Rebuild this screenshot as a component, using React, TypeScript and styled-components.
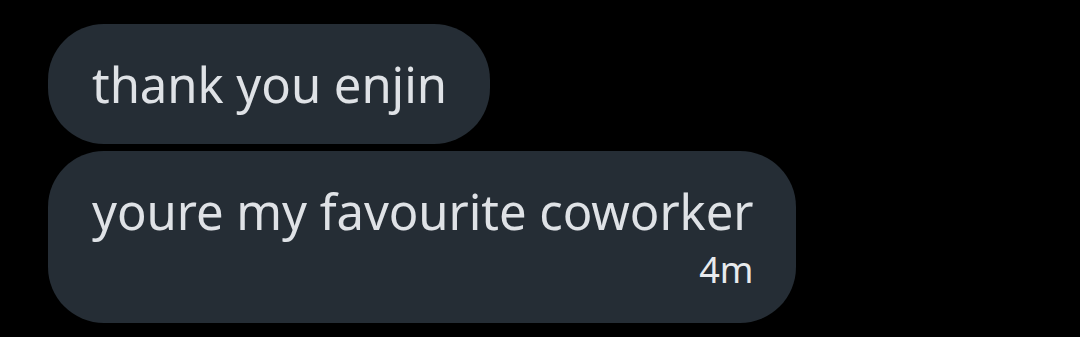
import React from 'react'
import styled, { createGlobalStyle } from 'styled-components'

const GlobalStyle = createGlobalStyle`
  html, body {
    margin: 0;
    padding: 0;
    background: #000;
  }
  body {
    font-family: "Noto Sans", Roboto, "Liberation Sans", sans-serif;
  }
`

const Thread = styled.div`
  display: flex;
  flex-direction: column;
  align-items: flex-start;
  gap: 7px;
  padding: 24px 0 0 48px;
  width: 1080px;
  height: 337px;
  box-sizing: border-box;
  background: #000;
`

const Bubble = styled.div`
  display: flex;
  flex-direction: column;
  background: #252d35;
  border-radius: 56px;
  padding: 31px 43px 31px 44px;
  box-sizing: border-box;
`

const Text = styled.div`
  color: #dfe2e6;
  font-size: 49px;
  letter-spacing: -0.05px;
  line-height: 58px;
  white-space: nowrap;
`

const Time = styled.div`
  align-self: flex-end;
  color: #e8eaed;
  font-size: 36px;
  line-height: 44px;
  margin-top: 8px;
`

type Message = { text: string; time?: string }

const messages: Message[] = [
  { text: 'thank you enjin' },
  { text: 'youre my favourite coworker', time: '4m' },
]

export default function App() {
  return (
    <>
      <GlobalStyle />
      <Thread>
        {messages.map((m, i) => (
          <Bubble key={i}>
            <Text>{m.text}</Text>
            {m.time && <Time>{m.time}</Time>}
          </Bubble>
        ))}
      </Thread>
    </>
  )
}
